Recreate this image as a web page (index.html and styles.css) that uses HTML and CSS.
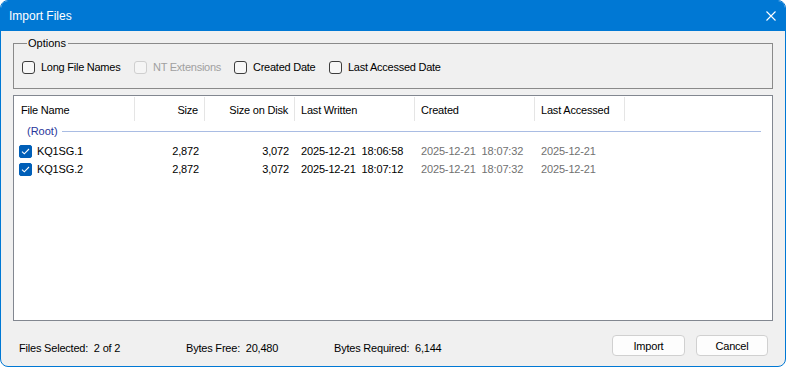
FILE: index.html
```html
<!DOCTYPE html>
<html>
<head>
<meta charset="utf-8">
<title>Import Files</title>
<link rel="stylesheet" href="styles.css">
</head>
<body>
<div class="window">
  <div class="titlebar">
    <span class="title">Import Files</span>
    <svg class="close" width="10" height="10" viewBox="0 0 10 10"><path d="M0.5 0.5 L9.5 9.5 M9.5 0.5 L0.5 9.5" stroke="#fff" stroke-width="1.1" fill="none"/></svg>
  </div>
  <div class="content">
    <fieldset class="options">
      <legend>Options</legend>
      <div class="opts">
        <label class="opt"><span class="cb"></span>Long File Names</label>
        <label class="opt disabled"><span class="cb"></span>NT Extensions</label>
        <label class="opt"><span class="cb"></span>Created Date</label>
        <label class="opt"><span class="cb"></span>Last Accessed Date</label>
      </div>
    </fieldset>
    <div class="list">
      <div class="lv-head">
        <div class="hc">File Name</div>
        <div class="hc right">Size</div>
        <div class="hc right">Size on Disk</div>
        <div class="hc">Last Written</div>
        <div class="hc">Created</div>
        <div class="hc">Last Accessed</div>
      </div>
      <div class="group"><span class="gname">(Root)</span><span class="gline"></span></div>
      <div class="row">
        <div class="c name"><span class="cb checked"><svg width="9" height="7" viewBox="0 0 9 7"><path d="M1 3.6 L3.3 5.8 L8 1" stroke="#fff" stroke-width="1.1" fill="none"/></svg></span>KQ1SG.1</div>
        <div class="c right">2,872</div>
        <div class="c right">3,072</div>
        <div class="c">2025-12-21  18:06:58</div>
        <div class="c dim">2025-12-21  18:07:32</div>
        <div class="c dim">2025-12-21</div>
      </div>
      <div class="row">
        <div class="c name"><span class="cb checked"><svg width="9" height="7" viewBox="0 0 9 7"><path d="M1 3.6 L3.3 5.8 L8 1" stroke="#fff" stroke-width="1.1" fill="none"/></svg></span>KQ1SG.2</div>
        <div class="c right">2,872</div>
        <div class="c right">3,072</div>
        <div class="c">2025-12-21  18:07:12</div>
        <div class="c dim">2025-12-21  18:07:32</div>
        <div class="c dim">2025-12-21</div>
      </div>
    </div>
    <div class="footer">
      <span class="stat">Files Selected:  2 of 2</span>
      <span class="stat">Bytes Free:  20,480</span>
      <span class="stat">Bytes Required:  6,144</span>
      <div class="buttons">
        <button class="btn import">Import</button>
        <button class="btn cancel">Cancel</button>
      </div>
    </div>
  </div>
</div>
</body>
</html>
```
FILE: styles.css
```css
* { box-sizing: border-box; }
html, body { margin: 0; padding: 0; background: #ffffff; }
body {
  font-family: "Liberation Sans", Arial, sans-serif;
  font-size: 11px;
  color: #000;
}
.window {
  width: 786px;
  height: 367px;
  border: 1px solid #0078d4;
  border-radius: 8px;
  overflow: hidden;
  background: #f0f0f0;
  display: flex;
  flex-direction: column;
}
.titlebar {
  height: 30px;
  flex: none;
  background: #0078d4;
  color: #fff;
  display: flex;
  align-items: center;
  justify-content: space-between;
  padding: 0 9px 0 8px;
}
.title { font-size: 12px; }
.close { display: block; margin-top: -1px; }
.content {
  flex: 1;
  display: flex;
  flex-direction: column;
  padding: 6px 12px 0 12px;
}
.options {
  margin: 0;
  border: 1px solid #8a8a8a;
  padding: 10px 8px 14px 8px;
  min-width: 0;
}
.options legend {
  padding: 0 2px 0 1px;
  margin-left: 5px;
  line-height: 13px;
}
.opts {
  display: grid;
  grid-template-columns: 112px 100px 95px auto;
  align-items: center;
}
.opt {
  display: flex;
  align-items: center;
  gap: 6px;
  height: 14px;
  letter-spacing: -0.25px;
}
.cb {
  width: 13px;
  height: 13px;
  border: 1px solid #3d3d3d;
  border-radius: 3px;
  background: #f7f7f7;
  flex: none;
  display: flex;
  align-items: center;
  justify-content: center;
}
.opt.disabled { color: #a0a0a0; }
.opt.disabled .cb { border-color: #cfcfcf; background: #f5f5f5; }
.list {
  margin-top: 6px;
  height: 226px;
  border: 1px solid #828790;
  background: #fff;
}
.lv-head, .row {
  display: grid;
  grid-template-columns: 121px 70px 90px 120px 120px 90px;
}
.lv-head { height: 25px; }
.hc {
  border-right: 1px solid #e5e5e5;
  margin: 1px 0 0 0;
  padding: 2px 6px 0 6px;
  display: flex;
  align-items: center;
  letter-spacing: -0.2px;
}
.hc:first-child { padding-left: 7px; }
.hc.right { justify-content: flex-end; }
.group {
  height: 20px;
  margin-bottom: 1px;
  display: flex;
  align-items: center;
  padding: 0 11px 0 13px;
  gap: 4px;
}
.gname { color: #27359a; }
.gline { flex: 1; height: 1px; background: #a9bce3; }
.row { height: 18px; }
.c {
  display: flex;
  align-items: center;
  padding: 0 6px;
  white-space: pre;
  letter-spacing: -0.15px;
}
.c.right { justify-content: flex-end; }
.c.name { padding-left: 5px; gap: 5px; }
.c.dim { color: #717171; }
.cb.checked {
  background: #005fb8;
  border-color: #005fb8;
  border-radius: 2px;
}
.cb.checked svg { display: block; }
.footer {
  flex: 1;
  display: grid;
  grid-template-columns: 167px 148px 1fr auto;
  align-items: start;
  padding: 14px 5px 0 6px;
}
.stat { white-space: pre; padding-top: 7px; letter-spacing: -0.2px; }
.buttons { display: flex; gap: 11px; }
.btn {
  font-family: "Liberation Sans", Arial, sans-serif;
  font-size: 11px;
  color: #000;
  height: 21px;
  background: #fdfdfd;
  border: 1px solid #d0d0d0;
  border-radius: 4px;
  padding: 0;
  letter-spacing: -0.2px;
}
.btn.import { width: 73px; }
.btn.cancel { width: 72px; }
```
